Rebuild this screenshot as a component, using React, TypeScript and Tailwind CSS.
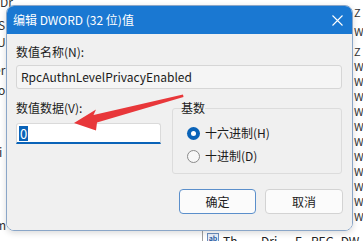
const font = "font-['Segoe_UI','Noto_Sans_CJK_SC','Noto_Sans',sans-serif]";

function Radio({ checked, label }: { checked: boolean; label: string }) {
	return (
		<div className="flex items-center gap-[5px]">
			{checked ? (
				<span className="w-[13px] h-[13px] rounded-full bg-[#0a63b8] flex items-center justify-center">
					<span className="w-[5px] h-[5px] rounded-full bg-white" />
				</span>
			) : (
				<span className="w-[13px] h-[13px] rounded-full border border-[#8a8a8a] bg-[#f7f7f7]" />
			)}
			<span className="text-[12px] leading-[16px] text-[#1b1b1b]">{label}</span>
		</div>
	);
}

function Background() {
	const rightLetters = ['W', 'W', 'W', 'W', 'W', 'W', 'W', 'W', 'W', 'W', 'W'];
	return (
		<>
			{/* regedit window peeking out behind the dialog */}
			<div className="absolute left-0 top-[-6px] text-[12px] leading-[16px] text-[#333]">Dr</div>
			<div className="absolute left-[-2px] top-[17px] text-[12px] leading-[16px] text-[#333]">S</div>
			<div className="absolute left-[-3px] top-[34px] text-[12px] leading-[16px] text-[#333]">U</div>
			<div className="absolute left-[-6px] top-[62px] text-[12px] leading-[16px] text-[#333]">er</div>
			<div className="absolute left-[-2px] top-[82px] text-[12px] leading-[16px] text-[#333]">o</div>
			<div className="absolute left-[-1px] top-[144px] text-[12px] leading-[16px] text-[#333]">i</div>
			<div className="absolute left-[-5px] top-[217px] text-[12px] leading-[16px] text-[#333]">m</div>

			<div className="absolute left-[354px] top-[5px] flex flex-col text-[11px] text-[#333]">
				<span className="leading-[15px]">Z</span>
				<span className="leading-[15px] mt-[4px]">W</span>
				<span className="leading-[15px] mt-[5px]">Z</span>
				{rightLetters.map((l, i) => (
					<span key={i} className="leading-[15px]">{l}</span>
				))}
			</div>

			<div className="absolute left-[202px] top-[230px] w-px h-[11px] bg-[#a0a0a0]" />
			<div className="absolute left-[207px] top-[233px] flex items-start gap-[4px] text-[12px] leading-[16px] text-[#222]">
				<span className="w-[12px] h-[10px] border border-[#6b8fc0] bg-[#e9f0fb] text-[7px] leading-[8px] text-[#2a5aa0] text-center font-bold">ab</span>
				<span className="w-[34px]">Th</span>
				<span className="w-[30px]">Dri</span>
				<span className="w-[12px]">F</span>
				<span>REG_DW</span>
			</div>
		</>
	);
}

function Arrow() {
	return (
		<svg className="absolute left-0 top-0 pointer-events-none" width="363" height="241" viewBox="0 0 363 241">
			<polygon
				points="74,123 96,109.5 93.5,115 183,94.5 183.5,97 97,122.5 96,130.5"
				fill="#e8373a"
			/>
		</svg>
	);
}

export default function App() {
	return (
		<div className={`relative w-[363px] h-[241px] overflow-hidden bg-white ${font}`}>
			<Background />

			<div className="absolute left-[6px] top-[5px] w-[347px] h-[226px] rounded-[8px] border border-[#8aa6c8] overflow-hidden flex flex-col shadow-[0_2px_6px_rgba(0,0,0,0.15)]">
				<div className="h-[28px] bg-[#1a78d2] flex items-center justify-between pl-[6px] pr-[9px] text-white">
					<span className="text-[12px] leading-[16px]">编辑 DWORD (32 位)值</span>
					<svg width="11" height="11" viewBox="0 0 11 11">
						<path d="M0.5 0.5 L10.5 10.5 M10.5 0.5 L0.5 10.5" stroke="#ffffff" strokeWidth="1.1" />
					</svg>
				</div>

				<div className="flex-1 bg-[#f0f0f0] px-[9px] pt-[10px] flex flex-col">
					<div className="text-[12px] leading-[16px] text-[#1b1b1b]">数值名称(N):</div>
					<div className="mt-[5px] h-[24px] w-[326px] border border-[#d6d6d6] bg-[#f5f5f5] rounded-[3px] flex items-center pl-[4px] text-[12px] text-[#1b1b1b]">
						RpcAuthnLevelPrivacyEnabled
					</div>

					<div className="mt-[11px] flex">
						<div className="w-[156px] flex flex-col">
							<div className="text-[12px] leading-[16px] text-[#1b1b1b]">数值数据(V):</div>
							<div className="mt-[7px] h-[21px] w-[145px] bg-white border border-[#dadada] border-b-2 border-b-[#0a63b8] rounded-t-[3px] flex items-center pl-[2px]">
								<span className="bg-[#0a63b8] text-white text-[13px] leading-[15px] px-px">0</span>
							</div>
						</div>

						<div className="relative mt-[8px] w-[170px] h-[66px] border border-[#dcdcdc] rounded-[3px] pt-[16px] pl-[14px] flex flex-col gap-[7px]">
							<span className="absolute left-[8px] top-[-9px] bg-[#f0f0f0] text-[12px] leading-[16px] text-[#1b1b1b]">基数</span>
							<Radio checked label="十六进制(H)" />
							<Radio checked={false} label="十进制(D)" />
						</div>
					</div>

					<div className="mt-[15px] flex justify-end gap-[9px]">
						<button className="w-[77px] h-[25px] rounded-[4px] border border-[#5b8fcb] bg-[#fbfbfb] text-[12px] text-[#1b1b1b]">确定</button>
						<button className="w-[78px] h-[25px] rounded-[4px] border border-[#d3d3d3] bg-[#fbfbfb] text-[12px] text-[#1b1b1b]">取消</button>
					</div>
				</div>
			</div>

			<Arrow />
		</div>
	);
}
